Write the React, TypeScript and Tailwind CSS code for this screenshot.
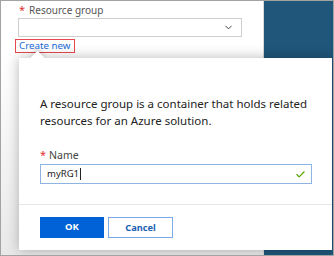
import { ChevronDown, Check } from 'lucide-react';

export default function App() {
  return (
    <div className="relative w-[334px] h-[256px] overflow-hidden border border-[#a3a3a3] bg-white flex font-['Noto_Sans',sans-serif]">
      {/* Form behind the flyout */}
      <div className="flex-1 flex flex-col items-start pl-[14px] pt-[2px] bg-gradient-to-b from-white from-[20%] to-[#e9e9e9]">
        <div className="flex items-center gap-[4px] pl-[4px] h-[14px] text-[10px] leading-[14px] text-[#555]">
          <span className="text-[#e0302f] text-[11px]">*</span>
          <span>Resource group</span>
        </div>
        <div className="mt-[1px] ml-[3px] w-[224px] h-[19px] border border-[#cfcfcf] bg-white flex items-center justify-end pr-[7px]">
          <ChevronDown size={11} strokeWidth={2} className="text-[#333]" />
        </div>
        <div className="mt-[2px] px-[3px] h-[14px] flex items-center border-[1.5px] border-[#e5484d] text-[9.75px] leading-[12px] text-[#1a6ad6]">
          Create new
        </div>
      </div>
      <div className="w-[70px] bg-[#1f5679] border-l border-[#d9d9d9]" />

      {/* Flyout */}
      <div className="absolute left-[18px] top-[57px] right-[1px] bottom-[5px] bg-white shadow-[0_0_12px_rgba(0,0,0,0.28)] flex flex-col">
        <div className="absolute left-[13px] -top-[5px] w-[11px] h-[11px] rotate-45 bg-white shadow-[-2px_-2px_4px_rgba(0,0,0,0.12)]" />
        <div className="relative flex flex-col pl-[21px] pr-[20px] pt-[37px] pb-[20px] border-b border-[#e6e6e6] bg-white">
          <p className="pr-[2px] text-[11.5px] leading-[17px] text-[#222]">
            A resource group is a container that holds related resources for an Azure solution.
          </p>
          <div className="mt-[19px] flex items-center gap-[3px] h-[14px] text-[10.5px] leading-[14px] text-[#444]">
            <span className="text-[#e0302f] text-[11px]">*</span>
            <span>Name</span>
          </div>
          <div className="mt-[2px] h-[20px] border border-[#8db4e2] flex items-center pl-[6px] pr-[5px] text-[9.5px] text-[#222]">
            <span>myRG1</span>
            <span className="w-px h-[12px] bg-[#222] ml-px" />
            <span className="flex-1" />
            <Check size={11} strokeWidth={2.5} className="text-[#57a300]" />
          </div>
        </div>
        <div className="flex gap-[4px] pl-[21px] pt-[12px]">
          <button className="w-[64px] h-[21px] bg-[#0062d6] text-white text-[9.5px] font-bold">OK</button>
          <button className="w-[65px] h-[21px] bg-white border border-[#7aaae8] text-[#1a5fb4] text-[9.25px] font-bold">Cancel</button>
        </div>
      </div>
    </div>
  );
}
